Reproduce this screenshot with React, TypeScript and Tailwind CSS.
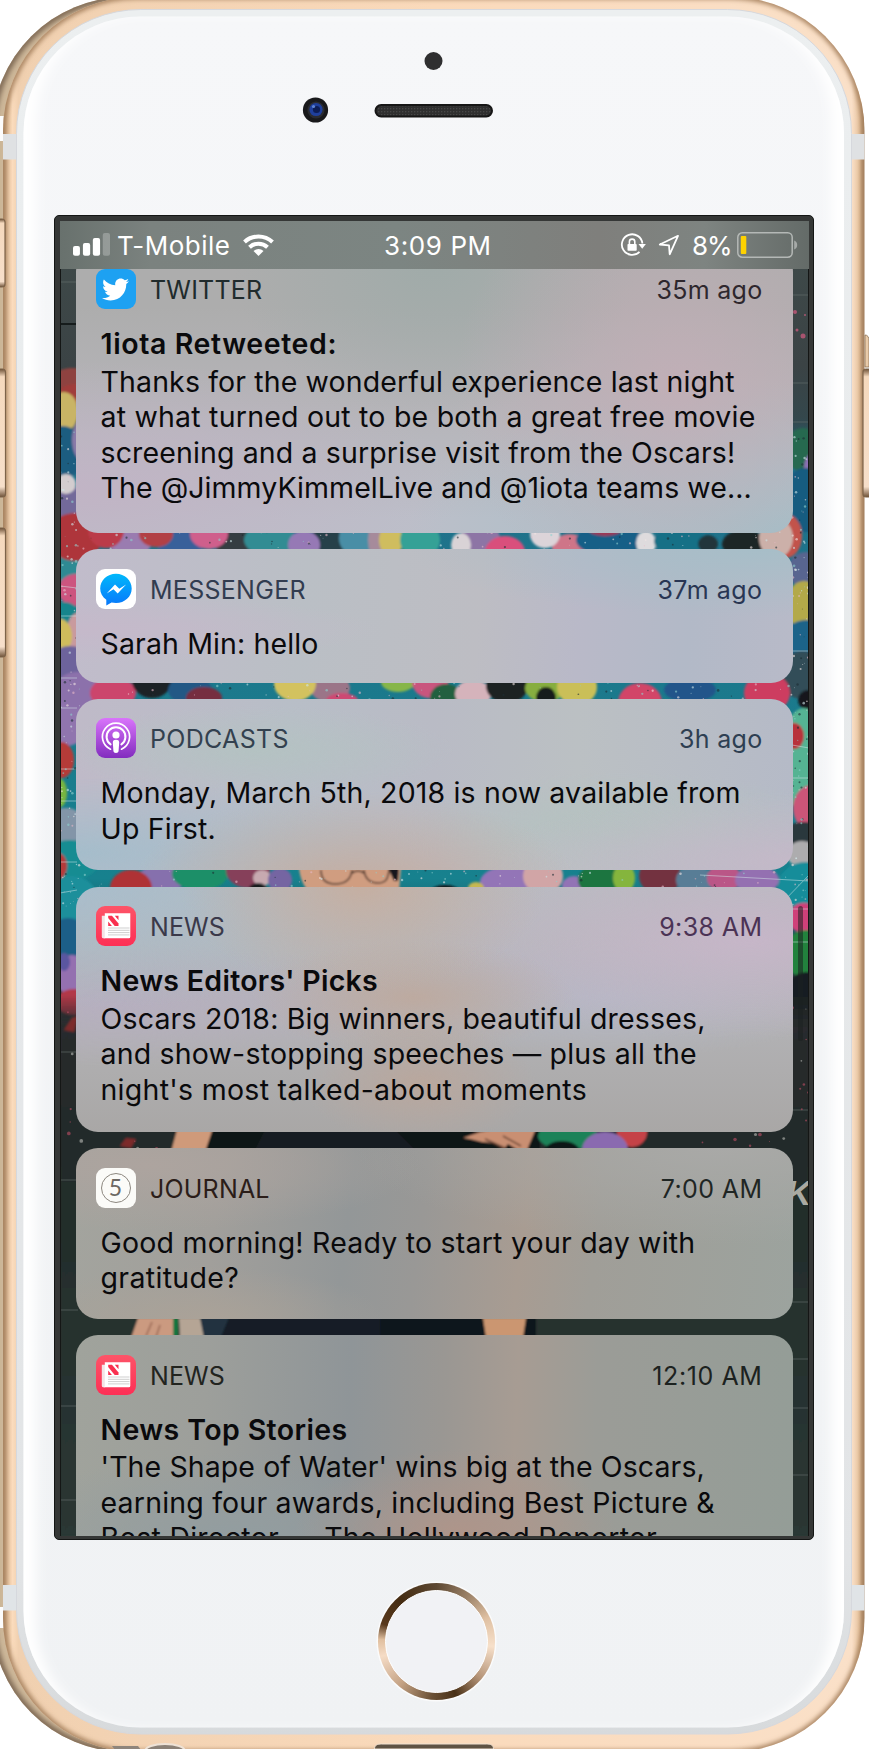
import React from "react";
import { FaTwitter } from "react-icons/fa";

type Line = { text: string; cls: string; bold?: boolean };
type Note = {
  app: string;
  appCls: string;
  time: string;
  timeCls: string;
  icon: React.ReactNode;
  box: string;
  lines: Line[];
};

function TwitterIcon() {
  return (
    <div className="flex h-10 w-10 items-center justify-center rounded-[9px] bg-[#1da1f2]">
      <FaTwitter className="h-[27px] w-[27px] text-white" />
    </div>
  );
}

function MessengerIcon() {
  return (
    <svg viewBox="0 0 40 40" className="h-10 w-10 rounded-[9px] bg-white">
      <defs>
        <linearGradient id="msg" x1="0" y1="0" x2="0" y2="1">
          <stop offset="0" stopColor="#00b8fb" />
          <stop offset="1" stopColor="#0878fb" />
        </linearGradient>
      </defs>
      <path d="M20 4.800C11.200 4.800 4.200 11.300 4.200 19.400c0 4.500 2.200 8.500 6.100 11.300v5.700l5.200-2.900c1.400.3 2.900.5 4.500.5 8.700 0 15.700-6.500 15.700-14.600S28.700 4.800 20 4.800z" fill="url(#msg)" />
      <path d="M10.700 24.500l8.300-8.900 4.300 4.200 6.800-4.200-8.400 8.800-4.200-4.100z" fill="#fff" />
    </svg>
  );
}

function PodcastsIcon() {
  return (
    <svg viewBox="0 0 40 40" className="h-10 w-10 rounded-[9px]">
      <defs>
        <linearGradient id="pod" x1="0" y1="0" x2="0" y2="1">
          <stop offset="0" stopColor="#d974fb" />
          <stop offset="1" stopColor="#822cbe" />
        </linearGradient>
      </defs>
      <rect width="40" height="40" fill="url(#pod)" />
      <g fill="none" stroke="#fff" strokeLinecap="round">
        <path d="M14.500 31.200A13.600 13.600 0 1 1 25.500 31.200" strokeWidth="1.700" />
        <path d="M14.600 26.400A9.400 9.400 0 1 1 25.400 26.400" strokeWidth="2" />
      </g>
      <circle cx="20" cy="17" r="3.600" fill="#fff" />
      <path d="M16.800 24.500c0-2 1.300-2.700 3.200-2.700s3.200.7 3.200 2.700l-.6 8.300c-.1 1.500-1.100 2.200-2.600 2.200s-2.500-.7-2.600-2.200z" fill="#fff" />
    </svg>
  );
}

function NewsIcon() {
  return (
    <svg viewBox="0 0 40 40" className="h-10 w-10 rounded-[9px]">
      <defs>
        <linearGradient id="news" x1="0" y1="0" x2="0" y2="1">
          <stop offset="0" stopColor="#fd5468" />
          <stop offset="1" stopColor="#fd2f55" />
        </linearGradient>
      </defs>
      <rect width="40" height="40" fill="url(#news)" />
      <path d="M5.800 9.700h3.400v22.500H7.300a1.500 1.500 0 0 1-1.500-1.500z" fill="#f3e4e6" />
      <path d="M8.800 7.200h25.500v23.500a1.500 1.500 0 0 1-1.500 1.500H7.300c1-.2 1.500-.8 1.500-1.800z" fill="#fff" />
      <g fill="#f9304f">
        <path d="M12.200 9.800h3.800l6.500 7.800v2.300h-3.800l-6.500-7.800z" />
        <path d="M18.800 9.800h3.700v4.400zM12.200 15.600l3.700 4.300h-3.700z" />
      </g>
      <g stroke="#cfcfcf" strokeWidth="1">
        <path d="M12 22h21.500M12 24.300h21.500M12 26.600h21.500M12 28.900h21.500" />
      </g>
    </svg>
  );
}

function JournalIcon() {
  return (
    <div className="flex h-10 w-10 items-center justify-center rounded-[9px] bg-[#fbfbf8]">
      <div className="flex h-[30px] w-[30px] items-center justify-center rounded-full border-[1.5px] border-[#8d8880] pb-px font-['Lato',sans-serif] text-[23px] leading-none text-[#6d6963]">
        5
      </div>
    </div>
  );
}

const notes: Note[] = [
  {
    app: "TWITTER",
    appCls: "tracking-[0.2px] text-[#202b2c]",
    time: "35m ago",
    timeCls: "tracking-[0.3px] text-[#2e272d]",
    icon: <TwitterIcon />,
    box: "h-[283px] mb-[16.500px] bg-[radial-gradient(circle_at_84%_48%,#c4aeb7cc_0%,#c4aeb700_36%),radial-gradient(ellipse_at_100%_100%,#a2bfc8_0%,#a2bfc800_38%),radial-gradient(ellipse_at_0%_85%,#c1b4c5_0%,#c1b4c500_38%),radial-gradient(ellipse_at_50%_5%,#a0aba9_0%,#a0aba900_40%),linear-gradient(#adadad_20%,#b5b4b8_55%,#bcbfc9_95%)]",
    lines: [
      { text: "1iota Retweeted:", cls: "tracking-[0.600px]", bold: true },
      { text: "Thanks for the wonderful experience last night", cls: "tracking-[0.130px]" },
      { text: "at what turned out to be both a great free movie", cls: "tracking-[0.220px]" },
      { text: "screening and a surprise visit from the Oscars!", cls: "tracking-[0.130px]" },
      { text: "The @JimmyKimmelLive and @1iota teams we...", cls: "tracking-[0.070px]" },
    ],
  },
  {
    app: "MESSENGER",
    appCls: "tracking-[0.280px] text-[#323c50]",
    time: "37m ago",
    timeCls: "tracking-[0.5px] text-[#293653]",
    icon: <MessengerIcon />,
    box: "h-[133.500px] mb-[16px] bg-[radial-gradient(ellipse_at_95%_0%,#a7bec8_0%,#a7bec800_36%),radial-gradient(ellipse_at_0%_60%,#c5b9ca_0%,#c5b9ca00_30%),linear-gradient(95deg,#c1bccb_0%,#babfc5_32%,#bdbdc3_56%,#b9b9c8_70%,#b2b9c7_85%,#b8bac8_100%)]",
    lines: [{ text: "Sarah Min: hello", cls: "tracking-[0.130px]" }],
  },
  {
    app: "PODCASTS",
    appCls: "tracking-[0.300px] text-[#33414f]",
    time: "3h ago",
    timeCls: "tracking-[0.3px] text-[#2e3f52]",
    icon: <PodcastsIcon />,
    box: "h-[171.500px] mb-[16.500px] bg-[radial-gradient(ellipse_at_39%_110%,#c5ada0_0%,#c5ada000_36%),radial-gradient(ellipse_at_0%_90%,#a5bdcb_0%,#a5bdcb00_35%),radial-gradient(ellipse_at_100%_95%,#c4b9c8_0%,#c4b9c800_30%),radial-gradient(ellipse_at_76%_75%,#b4c2c0_0%,#b4c2c000_30%),radial-gradient(ellipse_at_25%_30%,#b4c2c2_0%,#b4c2c200_26%),linear-gradient(90deg,#bfbac8_0%,#b8bec7_30%,#b9bbc5_50%,#bbc0c3_70%,#b5bac7_100%)]",
    lines: [
      { text: "Monday, March 5th, 2018 is now available from", cls: "tracking-[0.160px]" },
      { text: "Up First.", cls: "tracking-[0.200px]" },
    ],
  },
  {
    app: "NEWS",
    appCls: "tracking-[0.1px] text-[#3a394a]",
    time: "9:38 AM",
    timeCls: "tracking-[0.4px] text-[#4b3355]",
    icon: <NewsIcon />,
    box: "h-[245.500px] mb-[16px] bg-[radial-gradient(ellipse_at_40%_0%,#c5afa2_0%,#c5afa200_30%),radial-gradient(ellipse_at_47%_45%,#bdaaa0_0%,#bdaaa000_30%),radial-gradient(ellipse_at_94%_22%,#c6b6c8_0%,#c6b6c800_36%),radial-gradient(ellipse_at_48%_80%,#b9a79d_0%,#b9a79d00_22%),radial-gradient(ellipse_at_74%_45%,#b4b7c4_0%,#b4b7c400_32%),radial-gradient(ellipse_at_0%_0%,#a9bdcb_0%,#a9bdcb00_35%),radial-gradient(ellipse_at_5%_48%,#b6afbf_0%,#b6afbf00_34%),linear-gradient(#b7bbc0_0%,#b3b3b6_50%,#a9a7a6_100%)]",
    lines: [
      { text: "News Editors' Picks", cls: "tracking-[0.290px]", bold: true },
      { text: "Oscars 2018: Big winners, beautiful dresses,", cls: "tracking-[0.170px]" },
      { text: "and show-stopping speeches — plus all the", cls: "tracking-[0.190px]" },
      { text: "night's most talked-about moments", cls: "tracking-[0.280px]" },
    ],
  },
  {
    app: "JOURNAL",
    appCls: "tracking-[0.2px] text-[#2b1d19]",
    time: "7:00 AM",
    timeCls: "tracking-[0.4px] text-[#1f2624]",
    icon: <JournalIcon />,
    box: "h-[171px] mb-[16px] bg-[radial-gradient(ellipse_at_17%_100%,#aaa298_0%,#aaa29800_22%),radial-gradient(ellipse_at_10%_10%,#ada49f_0%,#ada49f00_30%),radial-gradient(ellipse_at_90%_0%,#a9a9a7_0%,#a9a9a700_40%),linear-gradient(97deg,#a3a49e_0%,#a19f9b_20%,#939798_38%,#999896_48%,#a89c92_62%,#a09e98_72%,#9ca39e_100%)]",
    lines: [
      { text: "Good morning! Ready to start your day with", cls: "tracking-[0.220px]" },
      { text: "gratitude?", cls: "tracking-[0.350px]" },
    ],
  },
  {
    app: "NEWS",
    appCls: "tracking-[0.1px] text-[#22241f]",
    time: "12:10 AM",
    timeCls: "tracking-[0.6px] text-[#1c2220]",
    icon: <NewsIcon />,
    box: "h-[260px] bg-[radial-gradient(ellipse_at_53%_76%,#ae958a_0%,#ae958a00_30%),radial-gradient(ellipse_at_22%_78%,#929da0_0%,#929da000_30%),linear-gradient(92deg,#a0a39c_0%,#9d9f9b_18%,#8f9598_38%,#9a9793_51%,#a79c93_61%,#9b9c97_72%,#949d97_100%)]",
    lines: [
      { text: "News Top Stories", cls: "tracking-[0.380px]", bold: true },
      { text: "'The Shape of Water' wins big at the Oscars,", cls: "tracking-[0.090px]" },
      { text: "earning four awards, including Best Picture &", cls: "tracking-[0.190px]" },
      { text: "Best Director — The Hollywood Reporter", cls: "tracking-[0.250px]" },
    ],
  },
];

function NoteCard({ note }: { note: Note }) {
  return (
    <article className={`shrink-0 rounded-[22px] pl-[24.500px] pr-[30px] pt-[19.500px] ${note.box}`}>
      <header className="-ml-[5px] mb-[17px] flex h-10 items-center text-[25px] leading-10">
        {note.icon}
        <span className={`ml-[14.500px] pt-[2px] ${note.appCls}`}>{note.app}</span>
        <time className={`ml-auto pt-[2px] ${note.timeCls}`}>{note.time}</time>
      </header>
      <div className="text-[28.500px] leading-[35.500px] text-[#0a0a0c]">
        {note.lines.map((l) => (
          <p key={l.text} className={`whitespace-nowrap ${l.cls} ${l.bold ? "mb-[2px] font-semibold" : ""}`}>
            {l.text}
          </p>
        ))}
      </div>
    </article>
  );
}

function StatusBar() {
  return (
    <div className="z-10 flex h-12 shrink-0 items-center bg-[linear-gradient(90deg,#68716d_0%,#7b827f_12%,#7c8582_45%,#7f7f7c_72%,#7e8481_86%,#646b68_100%)] pl-[13px] pr-[10.500px] text-[26px] leading-[48px] text-white">
      <svg viewBox="0 0 37.300 23" className="h-[23px] w-[37px]">
        <g fill="#fff">
          <rect x="0" y="13" width="7" height="9.800" rx="2" />
          <rect x="10" y="10" width="7.300" height="12.800" rx="2" />
          <rect x="20" y="5" width="7.300" height="17.800" rx="2" />
          <rect x="30" y="0" width="7.300" height="22.800" rx="2" opacity=".25" />
        </g>
      </svg>
      <span className="ml-[7.500px] w-[121px] pt-[2px] tracking-[0.480px]">T-Mobile</span>
      <svg viewBox="0 0 31 22" className="ml-[5px] h-[22px] w-[31px]">
        <g fill="none" stroke="#fff" strokeWidth="4">
          <path d="M1.500 8A20.500 20.500 0 0 1 29.500 8" />
          <path d="M6.500 13.200A13.200 13.200 0 0 1 24.500 13.200" />
        </g>
        <path d="M15.500 22l-5-5a7.300 7.300 0 0 1 10 0z" fill="#fff" />
      </svg>
      <span className="ml-[110px] pt-[2px] tracking-[0.600px]">3:09 PM</span>
      <svg viewBox="0 0 26 24" className="ml-auto h-6 w-[26px]">
        <path d="M22.400 10.500A10.300 10.300 0 1 0 19.500 18.800" fill="none" stroke="#fff" strokeWidth="1.800" />
        <path d="M18.500 11h7.400l-3.700 4.800z" fill="#fff" />
        <rect x="7.500" y="11" width="9.200" height="6.800" rx=".8" fill="#fff" />
        <path d="M9.400 11V8.800a2.700 2.700 0 0 1 5.400 0V11" fill="none" stroke="#fff" strokeWidth="1.600" />
      </svg>
      <svg viewBox="0 0 22 22" className="ml-[12px] h-[22px] w-[22px]">
        <path d="M20 1.800L1.800 10.500l9.200.8.700 9z" fill="none" stroke="#fff" strokeWidth="1.800" strokeLinejoin="round" />
      </svg>
      <span className="ml-[12px] w-[45px] pt-[2px] tracking-[-1.200px]">8%</span>
      <svg viewBox="0 0 61 26" className="mt-px h-[26px] w-[61px]">
        <rect x=".8" y=".8" width="54.400" height="24.400" rx="4.500" fill="none" stroke="#b4b8b6" strokeWidth="1.500" />
        <rect x="3.800" y="4" width="5.500" height="18" rx="1" fill="#ffd200" />
        <path d="M57.200 8.500c4 1.500 4 7.500 0 9z" fill="#a6aaa8" />
      </svg>
    </div>
  );
}

const palette = ["#f1e6e4", "#e7b9c8", "#cfe6ea", "#1c2d33", "#8fd0cf"];
const speck = (i: number, k: number) => {
  const v = Math.sin(i * 127.1 + k * 311.7) * 43758.5453;
  return v - Math.floor(v);
};
const specks = Array.from({ length: 420 }, (_, i) => {
  const edge = i % 2 === 0;
  const y = 430 + speck(i, 1) * 480;
  return {
    x: edge ? (speck(i, 2) > 0.5 ? 60 + speck(i, 3) * 20 : 790 + speck(i, 3) * 19) : 60 + speck(i, 2) * 749,
    y: edge ? y : [541, 691, 879][i % 3] + (speck(i, 4) - 0.5) * 18,
    r: 0.4 + speck(i, 5) * 0.9,
    c: palette[Math.floor(speck(i, 6) * palette.length)],
  };
});
const splatter = Array.from({ length: 130 }, (_, i) => ({
  x: i % 2 ? 60 + speck(i, 7) * 110 : 690 + speck(i, 7) * 119,
  y: 1000 + speck(i, 8) * 150,
  r: 0.5 + speck(i, 9) * 1.4,
  c: i % 3 ? "#a8485c" : "#a5a8a4",
}));

/* [cx, cy, rx, ry, fill] */
const blobs: [number, number, number, number, string][] = [
  // left edge
  [72, 380, 20, 12, "#8e4340"], [76, 394, 18, 10, "#a03c3a"], [64, 412, 14, 20, "#c9b465"], [62, 452, 24, 26, "#1d5d80"], [82, 440, 10, 20, "#8a7aa8"],
  [62, 505, 24, 22, "#73699a"], [66, 484, 10, 10, "#d3cdcf"], [68, 568, 24, 14, "#2d8a93"], [76, 590, 18, 16, "#cc557f"],
  [64, 612, 14, 10, "#15858c"], [80, 634, 14, 22, "#c99a9e"], [60, 636, 12, 17, "#cfbc5c"], [70, 672, 26, 26, "#6d639c"],
  [66, 720, 24, 26, "#9074ae"], [61, 760, 13, 18, "#b53a38"], [60, 793, 7, 14, "#78b53f"], [66, 826, 20, 18, "#8395a8"],
  [70, 860, 30, 20, "#178c92"], [58, 866, 9, 13, "#b43b3b"], [72, 900, 26, 24, "#1b8f9b"], [68, 940, 22, 22, "#1b5f88"],
  [72, 975, 18, 20, "#946fb0"], [64, 962, 6, 9, "#5a56a0"], [74, 1002, 18, 13, "#b23848"],
  // right edge
  [803, 450, 18, 22, "#28694f"], [812, 468, 8, 14, "#8c6fb4"], [806, 500, 26, 32, "#195c80"], [806, 570, 18, 18, "#596590"],
  [804, 605, 18, 24, "#b3a94a"], [806, 640, 22, 20, "#1a6389"], [802, 675, 22, 24, "#314e59"], [808, 700, 10, 10, "#15191b"],
  [804, 760, 24, 52, "#54b393"], [794, 736, 10, 13, "#b8323a"], [812, 808, 19, 23, "#cb5478"], [804, 834, 22, 12, "#2b383c"],
  [802, 854, 15, 13, "#adacae"], [806, 886, 28, 24, "#128d9a"], [804, 918, 16, 15, "#cf4079"], [806, 954, 22, 24, "#21823e"],
  [806, 1006, 24, 34, "#191f21"],
  // first seam
  [75, 537, 27, 24, "#ae353a"], [130, 540, 22, 18, "#9a7cb0"], [106, 530, 18, 18, "#bb3b49"], [180, 545, 22, 16, "#39619a"],
  [156, 534, 17, 13, "#b24144"], [236, 540, 22, 18, "#363c42"], [209, 534, 19, 15, "#cf5f8c"], [270, 540, 26, 16, "#338c93"],
  [340, 540, 30, 18, "#263f49"], [304, 545, 16, 14, "#9679b5"], [357, 538, 18, 18, "#4a8ea6"], [376, 540, 8, 18, "#a68b9b"],
  [391, 540, 12, 16, "#cfbd5f"], [420, 540, 20, 18, "#34a196"], [480, 540, 20, 20, "#8d75a5"], [461, 545, 10, 12, "#d9d3d6"],
  [505, 552, 20, 16, "#d94f7c"], [570, 548, 18, 14, "#cf7488"], [545, 534, 15, 14, "#dcd4d9"], [610, 540, 34, 16, "#165f87"],
  [605, 530, 16, 6, "#9c3955"], [646, 543, 10, 12, "#dedbdd"], [680, 541, 26, 14, "#176f86"], [708, 544, 10, 9, "#20353a"],
  [744, 544, 22, 14, "#1e2526"], [786, 536, 16, 22, "#c2524b"], [776, 538, 17, 20, "#ccb0a9"],
  // second seam
  [78, 690, 24, 18, "#8c71ab"], [113, 693, 23, 16, "#cc456c"], [152, 680, 20, 18, "#1e2425"], [190, 690, 22, 14, "#215885"],
  [204, 698, 18, 11, "#762d40"], [330, 688, 20, 14, "#9b7588"], [295, 684, 21, 17, "#d3c25f"], [342, 701, 16, 8, "#cd4a73"],
  [398, 682, 17, 10, "#87b649"], [430, 682, 18, 16, "#c9547e"], [446, 698, 16, 14, "#23603f"], [473, 694, 18, 14, "#d5b3bb"],
  [507, 686, 21, 17, "#1b2021"], [545, 688, 20, 14, "#87ae3f"], [577, 687, 20, 18, "#cabf58"], [546, 698, 10, 11, "#171c1c"],
  [640, 703, 22, 20, "#d24568"], [690, 690, 26, 12, "#23558a"], [767, 693, 23, 20, "#cd3e60"],
  // third seam
  [160, 880, 24, 14, "#8670ad"], [131, 888, 21, 18, "#af3135"], [200, 874, 28, 16, "#1d8f68"], [248, 870, 22, 18, "#86405a"],
  [262, 878, 9, 8, "#c7aab0"], [258, 891, 10, 8, "#171a1e"], [280, 880, 12, 12, "#7565a2"], [510, 882, 30, 16, "#9374b7"],
  [543, 876, 20, 18, "#d1a5a6"], [574, 886, 12, 10, "#9273b5"], [600, 880, 22, 16, "#1d7440"], [624, 878, 11, 14, "#85b53c"],
  [660, 876, 21, 18, "#73303f"], [694, 880, 18, 14, "#587d96"], [724, 878, 17, 14, "#ba5687"], [757, 880, 22, 14, "#9470b1"],
  [445, 893, 15, 8, "#11181a"], [476, 888, 8, 6, "#c7b851"],
];

function Wallpaper() {
  return (
    <svg viewBox="60 221 749 1315" preserveAspectRatio="none" className="absolute inset-0 h-full w-full">
      <defs>
        <linearGradient id="wall" x1="0" y1="0" x2="0" y2="1">
          <stop offset="0" stopColor="#3f4b4a" />
          <stop offset=".11" stopColor="#3b4345" />
          <stop offset=".15" stopColor="#34474c" />
          <stop offset=".19" stopColor="#20708a" />
          <stop offset=".5" stopColor="#17818e" />
          <stop offset=".58" stopColor="#2b3036" />
          <stop offset=".7" stopColor="#222d2b" />
          <stop offset="1" stopColor="#2a3834" />
        </linearGradient>
        <linearGradient id="dark" x1="0" y1="0" x2="0" y2="1">
          <stop offset="0" stopColor="#292c2d" stopOpacity="0" />
          <stop offset=".06" stopColor="#292c2d" />
          <stop offset=".3" stopColor="#222c2a" />
          <stop offset="1" stopColor="#2b3734" />
        </linearGradient>
        <filter id="soft" x="-5%" y="-5%" width="110%" height="110%">
          <feGaussianBlur stdDeviation="0.9" />
        </filter>
      </defs>
      <rect x="60" y="221" width="749" height="1315" fill="url(#wall)" />
      <g filter="url(#soft)">
        {blobs.map(([cx, cy, rx, ry, fill], i) => (
          <ellipse key={i} cx={cx} cy={cy} rx={rx} ry={ry} fill={fill} />
        ))}
        {/* dark brick wall */}
        <rect x="60" y="995" width="749" height="541" fill="url(#dark)" />
        <path d="M120 1146l6-8 10 1-5 9zM64 1030l8-12 6-2-4 16z" fill="#7b2b2b" />
        <path d="M178 1126h37l-8 26h-36z" fill="#cf9a7a" />
        <path d="M214 1125h252l-10 30H204z" fill="#0e1214" />
        <path d="M265 1130h130l20 20H255z" fill="#171f21" />
        <path d="M450 1125h90v30H440z" fill="#101415" />
        <path d="M463 1138l17-6 30-6h27l-10 24-9 0-10-6-4 5-10-6-12-1-12-3z" fill="#c98f72" />
        <path d="M485 1139l20 9M503 1136l18 10" stroke="#6a4434" strokeWidth="1.500" />
        <ellipse cx="568" cy="1136" rx="30" ry="14" fill="#1f8259" />
        <ellipse cx="562" cy="1152" rx="18" ry="11" fill="#101416" />
        <ellipse cx="632" cy="1132" rx="15" ry="15" fill="#c54247" />
        <ellipse cx="605" cy="1150" rx="23" ry="18" fill="#8a6bb0" />
        {/* face with glasses */}
        <path d="M299 868h102l-2 24H310c-6-4-10-14-11-24z" fill="#d09d80" />
        <path d="M388 868h11l-1 13h-4z" fill="#17191b" />
        <path d="M321 870c0 10 5 14 14 14s16-4 17-14M364 870c1 9 6 13 14 13s10-4 11-13M352 873q6-4 12 0" fill="none" stroke="#4d342b" strokeWidth="1.600" />
        {/* legs and hand */}
        <rect x="196" y="1315" width="340" height="24" fill="#11171c" />
        <path d="M200 1315h60l-30 24h-32z" fill="#203340" />
        <path d="M230 1315h150v24H220z" fill="#151f26" />
        <path d="M138 1318h40l-2 20h-45z" fill="#cb9a80" />
        <path d="M146 1336l6-14M156 1337l4-12" stroke="#8b5b49" strokeWidth="1.200" />
        <path d="M173 1318h5v20h-5z" fill="#16763f" />
        <path d="M179 1318h21l4 20h-24z" fill="#b5a595" />
        <path d="M483 1318h43l-3 20h-37z" fill="#cb9671" />
      </g>
      {/* mortar lines */}
      <g stroke="#66716e" strokeWidth="1" opacity=".6">
        <path d="M60 282h18M792 295h18M792 383h18M60 1052h18M792 1110h18M60 1180h18M792 1302h18M792 1359h18M60 1406h18M60 1310h18M792 1408h18M792 1475h18M792 422h18M60 1500h18" />
      </g>
      <path d="M60 324h18" stroke="#161c1c" strokeWidth="2" />
      <g stroke="#d5e8ea" strokeWidth="1" opacity=".5">
        <path d="M60 586l17 2M60 616h17M60 678h17M60 708h17M60 769h17M60 801h17M60 862h17M60 893l17-3M792 651h17M792 745l17 3M792 778h17M792 909h17M792 942h17M700 875l109 6M780 905l29-30" />
      </g>
      {specks.map((s, i) => (
        <circle key={i} cx={s.x} cy={s.y} r={s.r} fill={s.c} opacity=".6" />
      ))}
      {splatter.map((s, i) => (
        <circle key={i} cx={s.x} cy={s.y} r={s.r} fill={s.c} opacity=".7" />
      ))}
      <g fill="#c4587a" opacity=".8">
        <circle cx="795" cy="312" r="2" />
        <circle cx="803" cy="336" r="2.500" />
        <circle cx="797" cy="330" r="1.500" />
        <circle cx="805" cy="315" r="1" />
      </g>
      <text x="786" y="1205" fontFamily="Liberation Sans, sans-serif" fontSize="35" fontWeight="700" fontStyle="italic" fill="#aaaaa2">
        K
      </text>
      <rect x="798" y="906" width="5" height="135" rx="2.500" fill="#1b2021" opacity=".55" />
    </svg>
  );
}

function Device() {
  return (
    <svg viewBox="0 0 869 1749" className="absolute inset-0 h-full w-full">
      <defs>
        <linearGradient id="gold" x1="0" y1="0" x2="1" y2="0">
          <stop offset="0" stopColor="#c9a684" />
          <stop offset=".005" stopColor="#e6c4a0" />
          <stop offset=".011" stopColor="#fbdcbd" />
          <stop offset=".018" stopColor="#f0d0b0" />
          <stop offset=".5" stopColor="#fadabb" />
          <stop offset=".985" stopColor="#fae0c8" />
          <stop offset=".994" stopColor="#e9c6a2" />
          <stop offset="1" stopColor="#b19272" />
        </linearGradient>
        <linearGradient id="face" x1="0" y1="0" x2="0" y2="1">
          <stop offset="0" stopColor="#f6f7f9" />
          <stop offset="1" stopColor="#f0f2f4" />
        </linearGradient>
        <linearGradient id="ring" x1="0" y1="0" x2="0" y2="1">
          <stop offset="0" stopColor="#eceff0" />
          <stop offset=".9" stopColor="#e2e4e6" />
          <stop offset="1" stopColor="#d7dadc" />
        </linearGradient>
        <linearGradient id="btn" x1="0" y1="0" x2="0" y2="1">
          <stop offset="0" stopColor="#6e5238" />
          <stop offset=".06" stopColor="#f5d9bd" />
          <stop offset=".92" stopColor="#f7dfca" />
          <stop offset="1" stopColor="#6e5238" />
        </linearGradient>
        <filter id="glow" x="-5%" y="-5%" width="110%" height="110%">
          <feGaussianBlur stdDeviation="6" />
        </filter>
        <filter id="edge" x="-5%" y="-5%" width="110%" height="110%">
          <feGaussianBlur stdDeviation="2.500" />
        </filter>
        <clipPath id="shell">
          <rect x="3" y="-3" width="861.500" height="1755" rx="134" />
        </clipPath>
        <clipPath id="rear">
          <rect x="-8" y="-3" width="300" height="1755" rx="134" />
        </clipPath>
        <clipPath id="glass">
          <rect x="23.500" y="16.500" width="820.500" height="1711" rx="117" />
        </clipPath>
        <pattern id="mesh" width="3" height="3" patternUnits="userSpaceOnUse">
          <rect width="3" height="3" fill="#2f2f2f" />
          <rect width="1.300" height="1.300" fill="#474747" />
        </pattern>
      </defs>
      {/* rear shell */}
      <g clipPath="url(#rear)">
        <rect x="-8" y="-3" width="300" height="1755" fill="#cdb799" />
        <rect x="-8" y="-3" width="300" height="1755" rx="134" fill="none" stroke="#7d6852" strokeWidth="7" filter="url(#edge)" />
      </g>
      <path d="M0 116h4v25H0zM0 1607h4v21H0z" fill="#fcfcfc" />
      {/* front shell */}
      <g clipPath="url(#shell)">
        <rect x="3" y="-3" width="861.500" height="1755" fill="url(#gold)" />
        <rect x="3" y="-4" width="861.500" height="1757" rx="134" fill="none" stroke="#a17c58" strokeWidth="6" filter="url(#edge)" />
        <rect x="0" y="134" width="18" height="25.500" fill="#dfe1e3" />
        <rect x="850" y="134" width="18" height="25.500" fill="#dfe1e3" />
        <rect x="0" y="1585" width="18" height="25.500" fill="#e0e4e7" />
        <rect x="850" y="1585" width="18" height="25.500" fill="#e0e4e7" />
      </g>
      <rect x="16.500" y="9.500" width="835" height="1724.500" rx="124" fill="url(#ring)" stroke="#d6d8dd" strokeWidth="1" />
      <rect x="23.500" y="16.500" width="820.500" height="1711" rx="117" fill="url(#face)" />
      <g clipPath="url(#glass)">
        <rect x="17" y="-6" width="833.500" height="1756" rx="128" fill="none" stroke="#fff" strokeWidth="38" filter="url(#glow)" />
      </g>
      {/* side buttons */}
      <g stroke="#7d6349" strokeWidth="1.200" fill="url(#btn)">
        <rect x="-6" y="219" width="11" height="68" rx="3" />
        <rect x="-6" y="369" width="11.500" height="128" rx="3" />
        <rect x="-6" y="528" width="11.500" height="129" rx="3" />
        <rect x="863" y="369" width="12" height="128" rx="3" />
      </g>
      <path d="M865 335q4 0 4 6v26h-4z" fill="#e9cbaa" stroke="#8a6f52" strokeWidth=".8" />
      {/* sensor, camera, speaker */}
      <circle cx="433.500" cy="61" r="9" fill="#2f2f30" />
      <circle cx="315.500" cy="110" r="12.600" fill="#19191b" />
      <circle cx="316" cy="110" r="8.600" fill="#2b2c31" />
      <circle cx="316" cy="109.500" r="6.600" fill="#1f3f9b" />
      <circle cx="316.500" cy="109.500" r="3.600" fill="#0d1d55" />
      <circle cx="313.500" cy="106.500" r="1.600" fill="#5d83d6" />
      <rect x="375.500" y="105" width="116.500" height="11.500" rx="5.700" fill="url(#mesh)" stroke="#161616" strokeWidth="2" />
      {/* bottom ports */}
      <path d="M374.500 1749c0-4 3-5 7-5h105c4 0 7 1 7 5z" fill="#5f5344" stroke="#efe0d0" strokeWidth="1" />
      <ellipse cx="165" cy="1751" rx="20" ry="7" fill="#8b8177" stroke="#eee2d6" strokeWidth="2" />
      <path d="M112 1746h26l3 4h-26z" fill="#8e857c" />
    </svg>
  );
}

export default function App() {
  return (
    <div className="relative flex h-[1749px] w-[869px] flex-col overflow-hidden bg-white font-['Inter','Liberation_Sans',sans-serif]">
      <Device />
      <div className="relative ml-[54px] mt-[214.500px] h-[1325.500px] w-[760px] shrink-0 rounded-[5px] border-[1.500px] border-[#141615] bg-[#353736] px-[4.500px] pb-[2.500px] pt-[5px]">
        <div className="relative flex h-[1315px] w-[749px] flex-col overflow-hidden">
          <Wallpaper />
          <div className="relative flex h-full flex-col">
            <StatusBar />
            <main className="min-h-0 flex-1 overflow-hidden pl-[16.500px] pr-[16px]">
              <div className="-mt-[19px] flex flex-col">
                {notes.map((n, i) => (
                  <NoteCard key={i} note={n} />
                ))}
              </div>
            </main>
          </div>
          <div className="pointer-events-none absolute inset-0 border-[1.500px] border-b-0 border-[#141615]" />
        </div>
      </div>
      <div className="relative ml-[378px] mt-[43px] flex h-[117px] w-[117px] shrink-0 items-center justify-center rounded-full bg-[conic-gradient(#5d4832_0deg,#9c8268_35deg,#dfc0a2_65deg,#f7e0ca_95deg,#b59478_130deg,#4a3117_160deg,#6b5136_185deg,#c4a284_220deg,#f5dcc6_255deg,#e0bf9f_272deg,#58391d_288deg,#452c12_320deg,#5d4832_360deg)] shadow-[0_0_0_1.5px_#fbfbfb]">
        <div className="h-[103px] w-[103px] rounded-full border-[1.500px] border-white bg-[#f1f2f5]" />
      </div>
    </div>
  );
}
